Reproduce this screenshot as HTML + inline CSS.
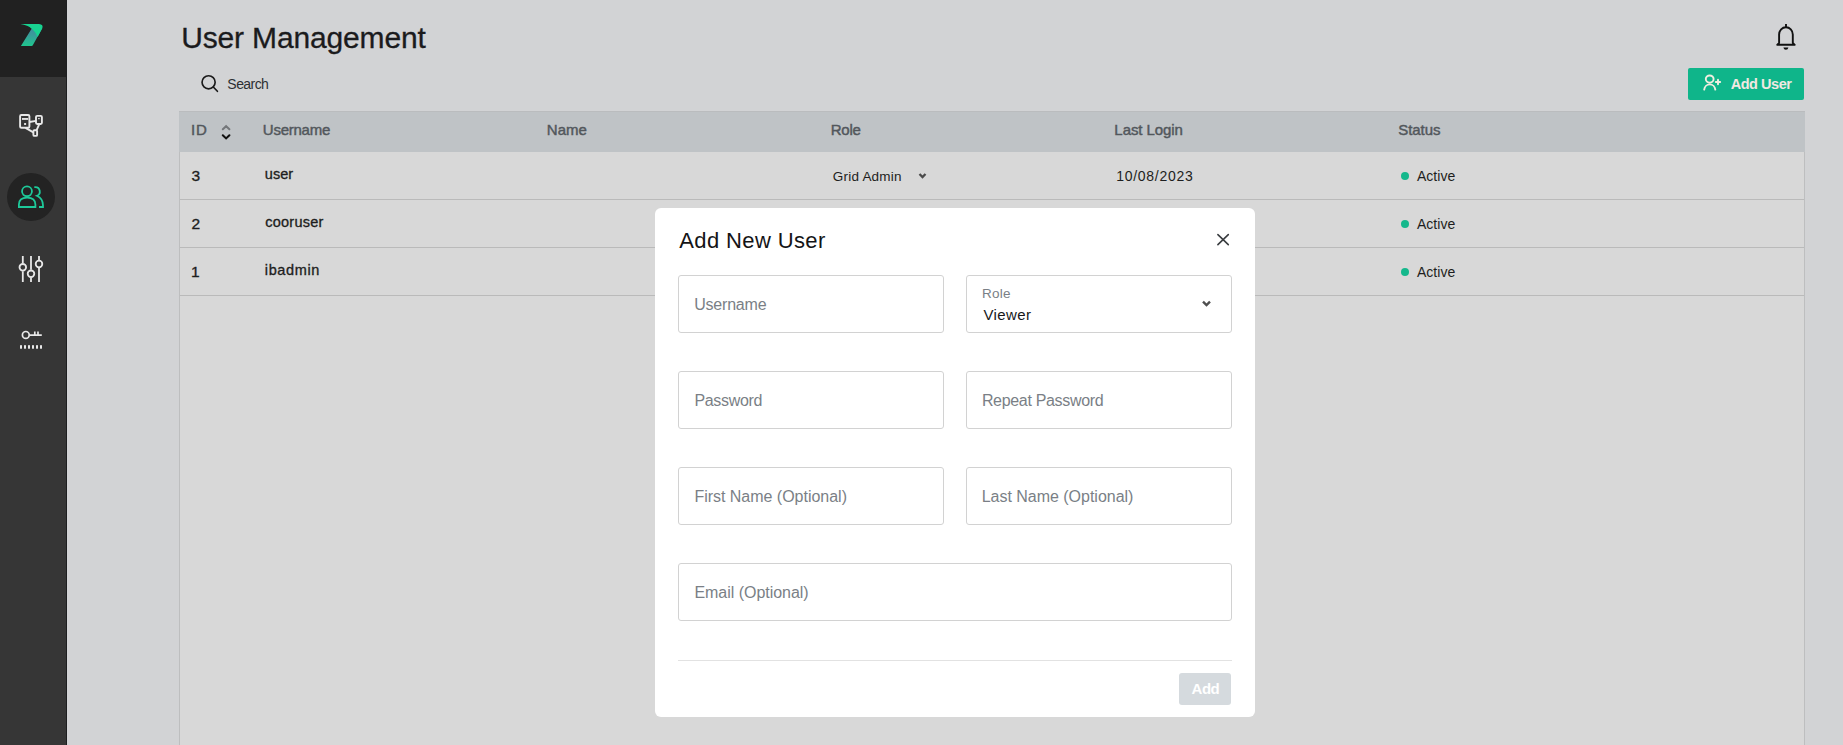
<!DOCTYPE html>
<html><head><meta charset="utf-8"><style>
*{box-sizing:border-box;margin:0;padding:0}
html,body{width:1843px;height:745px;overflow:hidden;background:#d2d3d5;font-family:"Liberation Sans",sans-serif}
.a{position:absolute}
.t{position:absolute;white-space:nowrap}
</style></head><body>
<!-- sidebar -->
<div class="a" style="left:0;top:0;width:67px;height:745px;background:#363636"></div>
<div class="a" style="left:0;top:0;width:67px;height:77px;background:#212121"></div>
<div class="a" style="left:66px;top:0;width:1px;height:745px;background:#1d1e20"></div>
<svg class="a" style="left:0;top:0" width="67" height="380" viewBox="0 0 67 380">
 <defs><linearGradient id="lg" x1="0" y1="0" x2="0" y2="1">
  <stop offset="0" stop-color="#3e8e9e"/><stop offset="0.35" stop-color="#3a9a9a"/><stop offset="1" stop-color="#1fc68e"/></linearGradient></defs>
 <path d="M31.6 28.8 L42.2 28.2 L32.8 45.2 Q32.4 46 31.6 46 L20.9 46 Z" fill="url(#lg)"/>
 <path d="M20.4 24.1 L39 24 Q43.8 24.3 42.2 28.6 L37.6 37 Q35.2 31.2 31.6 28.8 Q28 25 20.4 24.1 Z" fill="#18d391"/>
 <!-- topology icon -->
 <g fill="none" stroke="#e8e8e8" stroke-width="1.9">
  <rect x="20.1" y="115" width="9.3" height="12.7" rx="1.3"/>
  <rect x="36" y="115.9" width="5.9" height="8.1" rx="1.2"/>
  <rect x="33.4" y="130.2" width="3.7" height="5.7" rx="1"/>
  <path d="M29.4 122 L36 120.9 M39.3 124.2 L36.6 130.2 M25.5 127.8 L33.4 132.3"/>
 </g>
 <g fill="#e0e0e0"><rect x="22" y="118" width="6.1" height="1.9"/><rect x="24.1" y="123" width="2" height="2"/><rect x="38" y="118.1" width="1.8" height="1.1"/></g>
 <!-- active circle -->
 <circle cx="31" cy="197" r="24" fill="#232323"/>
 <g fill="none" stroke="#1ec99a" stroke-width="1.8">
  <circle cx="27" cy="191.3" r="4.95"/>
  <path d="M18.9 207 V204.5 Q18.9 197.6 27.1 197.6 Q35.4 197.6 35.4 204.5 V207 Z"/>
  <path d="M34.3 187.1 H35.2 A4.5 4.5 0 0 1 36.9 195.8 Q43 198.6 43 205.5 V207 H39"/>
 </g>
 <!-- sliders -->
 <g fill="none" stroke="#e8e8e8" stroke-width="1.8">
  <path d="M22.8 256 V263.2 M22.8 271.3 V282 M31 256 V269.8 M31 277.8 V282 M39 256 V260 M39 268 V282"/>
  <circle cx="22.8" cy="267.3" r="3.3"/><circle cx="31" cy="273.8" r="3.3"/><circle cx="39" cy="264" r="3.3"/>
 </g>
 <!-- key -->
 <g fill="none" stroke="#e8e8e8" stroke-width="1.7">
  <circle cx="25.8" cy="334.9" r="3.4"/>
  <path d="M29.2 335.2 H41.8 M34.8 331.4 V335.2 M38 331.4 V335.2"/>
 </g>
 <g fill="#e8e8e8"><rect x="20" y="345.2" width="2" height="3.5"/><rect x="24" y="345.2" width="2" height="3.5"/><rect x="28" y="345.2" width="2" height="3.5"/><rect x="32" y="345.2" width="2" height="3.5"/><rect x="36" y="345.2" width="2" height="3.5"/><rect x="40" y="345.2" width="2" height="3.5"/></g>
</svg>
<!-- search icon -->
<svg class="a" style="left:195px;top:70px" width="30" height="30" viewBox="195 70 30 30">
 <circle cx="208.6" cy="82.3" r="6.55" fill="none" stroke="#1a1a1a" stroke-width="1.65"/>
 <path d="M213.3 87 L217.4 91.3" stroke="#1a1a1a" stroke-width="1.65" stroke-linecap="round"/>
</svg>
<!-- bell -->
<svg class="a" style="left:1770px;top:18px" width="32" height="38" viewBox="1770 18 32 38">
 <g fill="none" stroke="#111" stroke-width="1.9" stroke-linejoin="round">
  <path d="M1777.2 44.8 L1779.1 42.9 V34.5 A6.85 7.2 0 0 1 1792.8 34.5 V42.9 L1794.7 44.8 Z"/>
  <path d="M1786 24 V27.6"/>
 </g>
 <path d="M1783.4 47.5 H1788.4 Q1788 49.8 1785.9 49.8 Q1783.8 49.8 1783.4 47.5 Z" fill="#111"/>
</svg>
<!-- add user button -->
<div class="a" style="left:1688px;top:68px;width:116px;height:32px;background:#0fb58a;border-radius:2px"></div>
<svg class="a" style="left:1698px;top:72px" width="28" height="24" viewBox="1698 72 28 24">
 <g fill="none" stroke="#f0eee0" stroke-width="1.9" stroke-linecap="round">
  <ellipse cx="1709.7" cy="79.1" rx="3.9" ry="3.6"/>
  <path d="M1704.2 89.6 A5.6 6 0 0 1 1715.3 89.6"/>
  <path d="M1718 79.8 V84.2 M1715.8 82 H1720.2"/>
 </g>
</svg>
<!-- table -->
<div class="a" style="left:179px;top:111px;width:1626px;height:700px;background:#d8d8d8;border:1px solid #bdbebf;border-top:none"></div>
<div class="a" style="left:179px;top:111px;width:1626px;height:41px;background:#bfc3c6;border-top:1px solid #babcbe"></div>
<div class="a" style="left:180px;top:199px;width:1624px;height:1px;background:#bababa"></div>
<div class="a" style="left:180px;top:247px;width:1624px;height:1px;background:#bababa"></div>
<div class="a" style="left:180px;top:295px;width:1624px;height:1px;background:#bababa"></div>
<!-- sort icon -->
<svg class="a" style="left:215px;top:120px" width="20" height="25" viewBox="215 120 20 25">
 <path d="M222.8 129.3 L226.1 126.2 L229.4 129.3" fill="none" stroke="#74777a" stroke-width="2" stroke-linecap="round"/>
 <path d="M222.8 135.3 L226.1 138.4 L229.4 135.3" fill="none" stroke="#111" stroke-width="2.1" stroke-linecap="round"/>
</svg>
<!-- role chevron -->
<svg class="a" style="left:912px;top:168px" width="20" height="16" viewBox="912 168 20 16">
 <path d="M919.5 174 L922.5 177 L925.5 174" fill="none" stroke="#4a4a4a" stroke-width="2.3"/>
</svg>
<!-- status dots -->
<div class="a" style="left:1401px;top:172px;width:8px;height:8px;border-radius:50%;background:#15b88c"></div>
<div class="a" style="left:1401px;top:220px;width:8px;height:8px;border-radius:50%;background:#15b88c"></div>
<div class="a" style="left:1401px;top:268px;width:8px;height:8px;border-radius:50%;background:#15b88c"></div>
<!-- modal -->
<div class="a" style="left:655px;top:208px;width:600px;height:509px;background:#fff;border-radius:6px"></div>
<svg class="a" style="left:1210px;top:226px" width="26" height="26" viewBox="1210 226 26 26">
 <path d="M1217.9 234.6 L1228.3 244.6 M1228.3 234.6 L1217.9 244.6" stroke="#3a3d40" stroke-width="1.6" stroke-linecap="round"/>
</svg>
<div class="a" style="left:678px;top:275px;width:266px;height:58px;border:1px solid #d2d2d2;border-radius:3px"></div>
<div class="a" style="left:966px;top:275px;width:266px;height:58px;border:1px solid #d2d2d2;border-radius:3px"></div>
<div class="a" style="left:678px;top:371px;width:266px;height:58px;border:1px solid #d2d2d2;border-radius:3px"></div>
<div class="a" style="left:966px;top:371px;width:266px;height:58px;border:1px solid #d2d2d2;border-radius:3px"></div>
<div class="a" style="left:678px;top:467px;width:266px;height:58px;border:1px solid #d2d2d2;border-radius:3px"></div>
<div class="a" style="left:966px;top:467px;width:266px;height:58px;border:1px solid #d2d2d2;border-radius:3px"></div>
<div class="a" style="left:678px;top:563px;width:554px;height:58px;border:1px solid #d2d2d2;border-radius:3px"></div>
<svg class="a" style="left:1196px;top:294px" width="20" height="18" viewBox="1196 294 20 18">
 <path d="M1203 301.6 L1206.5 305 L1210 301.6" fill="none" stroke="#4f4f4f" stroke-width="2.4"/>
</svg>
<div class="a" style="left:678px;top:660px;width:554px;height:1px;background:#e2e2e2"></div>
<div class="a" style="left:1179px;top:673px;width:52px;height:32px;background:#d5dade;border-radius:3px"></div>
<div class="t" style="left:181.19px;top:23.00px;font-size:30px;line-height:30px;letter-spacing:-0.153px;font-weight:normal;color:#1b1b1d;-webkit-text-stroke:0.3px #1b1b1d;">User Management</div>
<div class="t" style="left:227.36px;top:77.15px;font-size:14px;line-height:14px;letter-spacing:-0.563px;font-weight:normal;color:#2d2f33;">Search</div>
<div class="t" style="left:1730.64px;top:76.53px;font-size:14.5px;line-height:14.5px;letter-spacing:-0.454px;font-weight:bold;color:#f1e8e2;">Add User</div>
<div class="t" style="left:191.12px;top:122.30px;font-size:15px;line-height:15px;letter-spacing:0.802px;font-weight:normal;color:#52575c;-webkit-text-stroke:0.45px #52575c;">ID</div>
<div class="t" style="left:262.84px;top:122.30px;font-size:15px;line-height:15px;letter-spacing:-0.253px;font-weight:normal;color:#52575c;-webkit-text-stroke:0.45px #52575c;">Username</div>
<div class="t" style="left:546.77px;top:122.30px;font-size:15px;line-height:15px;letter-spacing:0.028px;font-weight:normal;color:#52575c;-webkit-text-stroke:0.45px #52575c;">Name</div>
<div class="t" style="left:830.77px;top:122.30px;font-size:15px;line-height:15px;letter-spacing:-0.251px;font-weight:normal;color:#52575c;-webkit-text-stroke:0.45px #52575c;">Role</div>
<div class="t" style="left:1114.37px;top:122.30px;font-size:15px;line-height:15px;letter-spacing:-0.069px;font-weight:normal;color:#52575c;-webkit-text-stroke:0.45px #52575c;">Last Login</div>
<div class="t" style="left:1398.32px;top:122.30px;font-size:15px;line-height:15px;letter-spacing:-0.080px;font-weight:normal;color:#52575c;-webkit-text-stroke:0.45px #52575c;">Status</div>
<div class="t" style="left:191.61px;top:167.88px;font-size:15.5px;line-height:15.5px;letter-spacing:0.000px;font-weight:normal;color:#1d1e20;-webkit-text-stroke:0.35px #1d1e20;">3</div>
<div class="t" style="left:264.86px;top:166.73px;font-size:14.5px;line-height:14.5px;letter-spacing:0.025px;font-weight:normal;color:#1d1e20;-webkit-text-stroke:0.32px #1d1e20;">user</div>
<div class="t" style="left:1416.97px;top:169.45px;font-size:14px;line-height:14px;letter-spacing:0.025px;font-weight:normal;color:#1d1e20;">Active</div>
<div class="t" style="left:191.42px;top:215.88px;font-size:15.5px;line-height:15.5px;letter-spacing:0.000px;font-weight:normal;color:#1d1e20;-webkit-text-stroke:0.35px #1d1e20;">2</div>
<div class="t" style="left:265.18px;top:214.73px;font-size:14.5px;line-height:14.5px;letter-spacing:0.263px;font-weight:normal;color:#1d1e20;-webkit-text-stroke:0.32px #1d1e20;">cooruser</div>
<div class="t" style="left:1416.97px;top:217.45px;font-size:14px;line-height:14px;letter-spacing:0.025px;font-weight:normal;color:#1d1e20;">Active</div>
<div class="t" style="left:191.02px;top:263.88px;font-size:15.5px;line-height:15.5px;letter-spacing:0.000px;font-weight:normal;color:#1d1e20;-webkit-text-stroke:0.35px #1d1e20;">1</div>
<div class="t" style="left:264.83px;top:262.73px;font-size:14.5px;line-height:14.5px;letter-spacing:0.622px;font-weight:normal;color:#1d1e20;-webkit-text-stroke:0.32px #1d1e20;">ibadmin</div>
<div class="t" style="left:1416.97px;top:265.45px;font-size:14px;line-height:14px;letter-spacing:0.025px;font-weight:normal;color:#1d1e20;">Active</div>
<div class="t" style="left:832.82px;top:169.57px;font-size:13.5px;line-height:13.5px;letter-spacing:0.215px;font-weight:normal;color:#1d1e20;">Grid Admin</div>
<div class="t" style="left:1116.23px;top:169.15px;font-size:14px;line-height:14px;letter-spacing:0.724px;font-weight:normal;color:#1d1e20;">10/08/2023</div>
<div class="t" style="left:679.26px;top:229.78px;font-size:22px;line-height:22px;letter-spacing:0.380px;font-weight:normal;color:#141416;">Add New User</div>
<div class="t" style="left:694.17px;top:296.66px;font-size:16px;line-height:16px;letter-spacing:-0.194px;font-weight:normal;color:#7a7f86;">Username</div>
<div class="t" style="left:694.39px;top:392.66px;font-size:16px;line-height:16px;letter-spacing:-0.301px;font-weight:normal;color:#7a7f86;">Password</div>
<div class="t" style="left:981.89px;top:392.66px;font-size:16px;line-height:16px;letter-spacing:-0.318px;font-weight:normal;color:#7a7f86;">Repeat Password</div>
<div class="t" style="left:694.39px;top:488.66px;font-size:16px;line-height:16px;letter-spacing:-0.016px;font-weight:normal;color:#7a7f86;">First Name (Optional)</div>
<div class="t" style="left:981.69px;top:488.66px;font-size:16px;line-height:16px;letter-spacing:-0.019px;font-weight:normal;color:#7a7f86;">Last Name (Optional)</div>
<div class="t" style="left:694.39px;top:584.66px;font-size:16px;line-height:16px;letter-spacing:-0.027px;font-weight:normal;color:#7a7f86;">Email (Optional)</div>
<div class="t" style="left:982.09px;top:286.57px;font-size:13.5px;line-height:13.5px;letter-spacing:0.181px;font-weight:normal;color:#7a7f86;">Role</div>
<div class="t" style="left:983.43px;top:307.00px;font-size:15px;line-height:15px;letter-spacing:0.393px;font-weight:normal;color:#17181a;">Viewer</div>
<div class="t" style="left:1191.53px;top:681.10px;font-size:15px;line-height:15px;letter-spacing:-0.448px;font-weight:bold;color:#ffffff;">Add</div>
</body></html>
